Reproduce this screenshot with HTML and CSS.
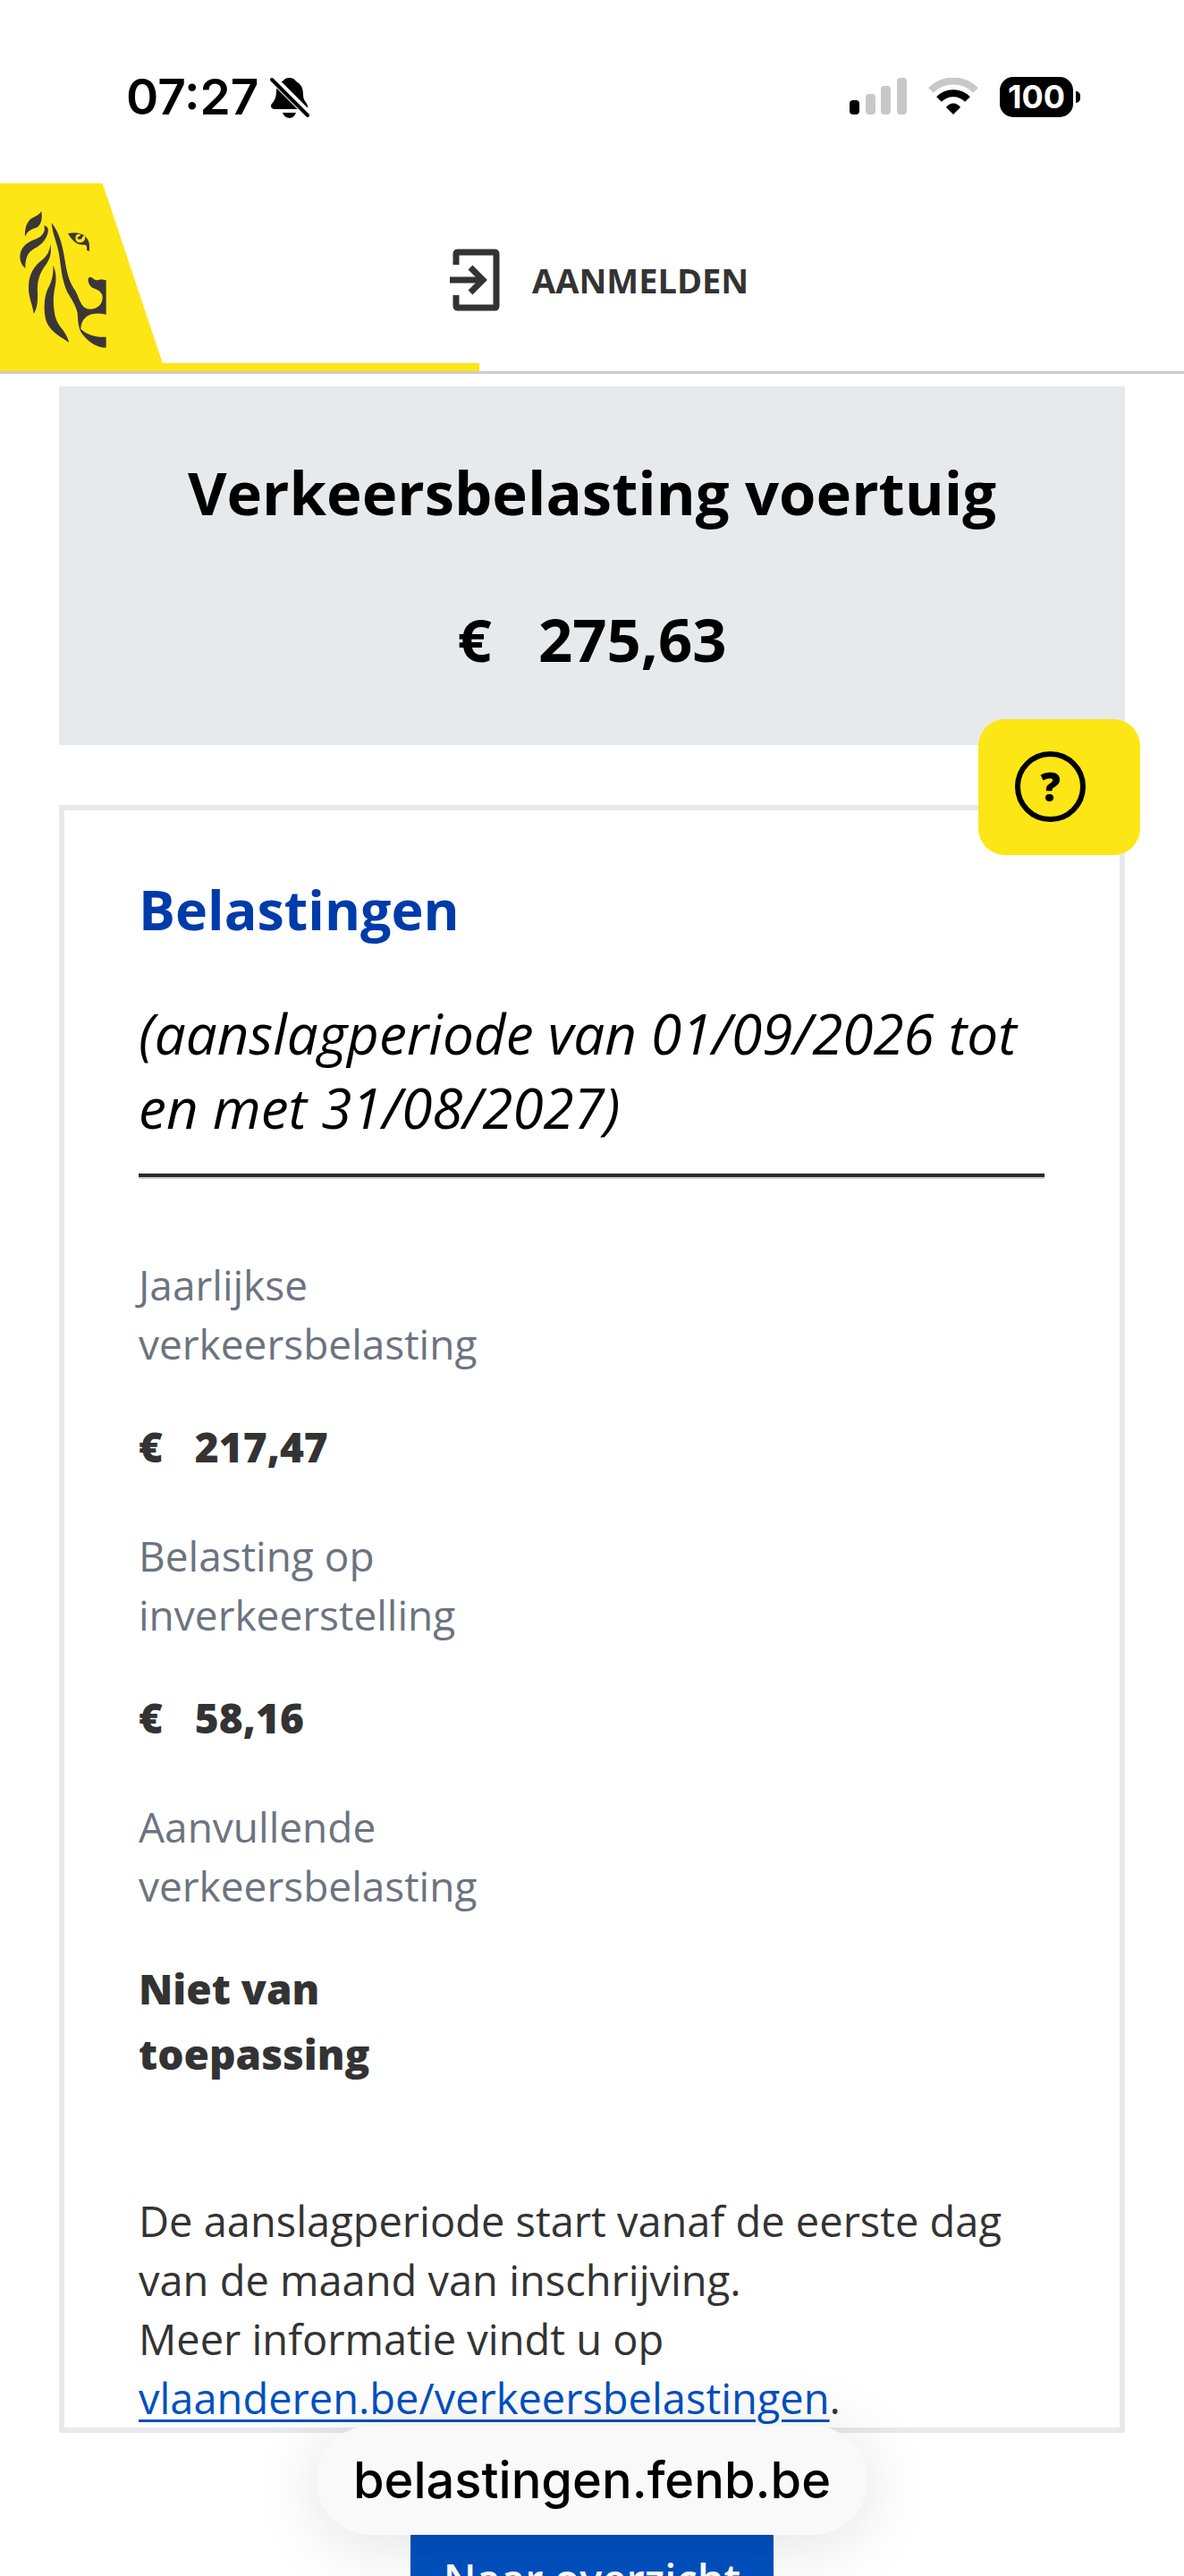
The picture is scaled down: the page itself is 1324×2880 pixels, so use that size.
FILE: index.html
```html
<!DOCTYPE html>
<html lang="nl">
<head>
    <meta charset="UTF-8">
    <meta name="viewport" content="width=device-width, initial-scale=1.0">
    <title>Verkeersbelasting voertuig</title>
    <link rel="stylesheet" href="styles.css">
</head>
<body>
    <div class="status-bar">
        <div class="status-left">
            <span class="time">07:27</span>
            <svg class="bell" viewBox="0 0 44 48" width="44" height="48" aria-hidden="true">
                <path d="M15 6 C17 2 27 2 29 7 C35 10 37 15 37 22 C37 29 42 31 42 35 C42 38 40 38 38 38 H5 C1 38 0 34 2 32 C6 27 7 24 7 17 C8 11 11 8 15 6Z"/>
                <path d="M14 42 H29 C28 45 25 48 22 48 C18 48 15 45 14 42Z"/>
                <path d="M1 2 L43 44" stroke="#fff" stroke-width="9"/>
                <path d="M2 5 L42 45" stroke="#000" stroke-width="4" stroke-linecap="round"/>
            </svg>
        </div>
        <div class="status-right">
            <svg viewBox="0 0 64 42" width="64" height="42" aria-hidden="true">
                <rect x="0" y="25" width="11" height="16" rx="4"/>
                <rect x="18" y="18" width="11" height="23" rx="4" fill="#c8c8c8"/>
                <rect x="35" y="9" width="11" height="32" rx="4" fill="#c8c8c8"/>
                <rect x="53" y="0" width="11" height="41" rx="4" fill="#c8c8c8"/>
            </svg>
            <svg viewBox="0 0 56 42" width="56" height="42" aria-hidden="true">
                <path d="M3 14 C17 0 39 0 53 14" fill="none" stroke="#c8c8c8" stroke-width="8"/>
                <path d="M12 24 C21 15 35 15 44 24" fill="none" stroke="#000" stroke-width="8"/>
                <path d="M28 41 L20 33 C24 27 32 27 36 33Z"/>
            </svg>
            <div class="battery">100</div>
        </div>
    </div>

    <header class="header">
        <a class="logo" href="#" aria-label="Vlaanderen">
            <svg viewBox="0 30 552 630" width="184" height="210" aria-hidden="true">
                <path fill="#fde615" d="M0 30 H344 L545 632 H552 V660 H0Z"/>
                <g fill="#3c3638">
                    <path d="M139 124 C143 150 138 165 125 178 C105 184 92 190 84 209 C82 180 90 160 105 148 C120 140 132 135 139 124Z"/>
                    <path d="M148 171 C164 176 164 190 158 204 C150 225 135 238 118 247 C100 258 85 270 85 315 C68 300 64 280 69 262 C76 238 95 228 112 220 C140 210 154 195 148 171Z"/>
                    <path d="M169 233 C174 265 168 285 150 308 C130 335 124 365 126 395 C127 425 125 450 113 467 C108 430 95 415 96 375 C97 330 118 305 140 288 C160 272 167 255 169 233Z"/>
                    <path d="M178 305 C190 330 190 355 183 385 C178 415 178 440 185 475 C195 515 220 520 232 564 C205 545 160 525 152 480 C145 440 150 400 165 375 C176 352 180 330 178 305Z"/>
                    <path d="M173 163 C200 195 210 240 218 290 C226 340 235 365 253 390 C268 420 272 452 303 452 C335 452 348 425 343 405 C338 388 322 385 310 380 C298 372 290 350 300 345 C312 342 312 358 330 354 C338 352 346 352 356 355 V470 C320 462 275 465 271 518 C290 538 325 548 356 545 V581 C330 582 300 565 280 540 C262 520 262 495 260 465 C255 440 238 415 226 395 C208 355 206 320 200 280 C195 235 175 200 173 163Z"/>
                    <path d="M228 198 C250 194 275 194 290 212 C302 225 300 240 300 257 L291 254 C292 245 292 238 286 236 C262 238 245 228 228 198Z"/>
                </g>
                <path fill="#fde615" d="M256 203 C250 215 254 228 268 229 C280 229 287 220 286 208 C282 203 276 207 276 213 C272 219 264 219 259 215 C263 207 268 208 272 202 C266 199 260 200 256 203Z"/>
            </svg>
        </a>
        <button class="login" type="button">
            <svg viewBox="0 0 56 70" width="56" height="70" fill="none" stroke="#333" aria-hidden="true">
                <path d="M7 18 V6 Q7 4 9 4 H50 Q52 4 52 6 V64 Q52 66 50 66 H9 Q7 66 7 64 V52" stroke-width="7"/>
                <path d="M0 35 H38" stroke-width="7"/>
                <path d="M23 21 L37 35 L23 49" stroke-width="7"/>
            </svg>
            AANMELDEN
        </button>
    </header>

    <main class="content">
        <section class="summary">
            <h1>Verkeersbelasting voertuig</h1>
            <p class="total">€&nbsp;&nbsp; 275,63</p>
        </section>

        <section class="card">
            <h2>Belastingen</h2>
            <p class="period">(aanslagperiode van 01/09/2026 tot en met 31/08/2027)</p>
            <hr>
            <dl class="taxes">
                <dt>Jaarlijkse verkeersbelasting</dt>
                <dd>€&nbsp;&nbsp; 217,47</dd>
                <dt>Belasting op inverkeerstelling</dt>
                <dd>€&nbsp;&nbsp; 58,16</dd>
                <dt>Aanvullende verkeersbelasting</dt>
                <dd>Niet van toepassing</dd>
            </dl>
            <p class="info">De aanslagperiode start vanaf de eerste dag van de maand van inschrijving.<br>
                Meer informatie vindt u op <a href="#">vlaanderen.be/verkeersbelastingen</a>.</p>
        </section>

        <button class="overview-btn" type="button">Naar overzicht</button>
    </main>

    <button class="help-btn" type="button" aria-label="Help">
        <span class="help-icon">?</span>
    </button>

    <div class="url-pill">belastingen.fenb.be</div>
</body>
</html>
```
FILE: styles.css
```css
*{
    box-sizing: border-box;
}
body{
    margin: 0;
    height: 100vh;
    overflow: hidden;
    background-color: #fff;
    color: #333;
    font-family: "Open Sans", sans-serif;
}
h1, h2, p, dl, dd{
    margin: 0;
}
button{
    border: none;
    font-family: inherit;
    cursor: pointer;
}
svg{
    display: block;
}

/* status bar */
.status-bar{
    display: flex;
    justify-content: space-between;
    align-items: center;
    height: 205px;
    padding: 11px 116px 0 141px;
    color: #000;
    font-family: "Inter", sans-serif;
}
.status-left{
    display: flex;
    align-items: center;
    gap: 12px;
}
.status-right{
    display: flex;
    align-items: center;
    gap: 24px;
}
.time{
    font-size: 55px;
    font-weight: 600;
    line-height: 66px;
}
.battery{
    position: relative;
    width: 82px;
    margin-right: 8px;
    border-radius: 15px;
    background-color: #000;
    color: #fff;
    font-size: 36px;
    font-weight: 700;
    line-height: 45px;
    text-align: center;
}
.battery::after{
    content: "";
    position: absolute;
    top: 16px;
    right: -8px;
    width: 5px;
    height: 13px;
    border-radius: 0 6px 6px 0;
    background-color: #000;
}

/* header */
.header{
    position: relative;
    display: flex;
    align-items: center;
    border-bottom: 3px solid #ccc;
}
.header::after{
    content: "";
    position: absolute;
    left: 0;
    bottom: 0;
    width: 536px;
    height: 9px;
    background-color: #fde615;
}
.login{
    display: flex;
    align-items: center;
    gap: 36px;
    margin-left: 319px;
    padding: 6px 0 0;
    background: none;
    color: #333;
    font-size: 38px;
    font-weight: 700;
    line-height: 66px;
}

/* content */
.content{
    padding: 14px 66px;
}
.summary{
    display: flex;
    flex-direction: column;
    gap: 80px;
    padding: 76px 40px 77px;
    background-color: #e7eaec;
    color: #000;
    text-align: center;
}
h1, .total{
    font-size: 67px;
    font-weight: 700;
    line-height: 84px;
}
.card{
    margin-top: 67px;
    padding: 73px 84px 0 83px;
    border: 6px solid #e7eaec;
}
h2{
    margin-bottom: 59px;
    color: #003baa;
    font-size: 61px;
    font-weight: 700;
    line-height: 76px;
}
.period{
    color: #000;
    font-size: 62px;
    font-style: italic;
    font-weight: 400;
    line-height: 83px;
}
hr{
    height: 6px;
    margin: 32px 0 85px;
    border: none;
    border-top: 4px solid #2b2b2b;
    border-bottom: 2px solid #ccc;
}
.taxes{
    width: 40%;
    font-size: 46px;
}
.taxes dt{
    color: #6b7480;
    line-height: 66px;
}
.taxes dd{
    margin: 46px 0 52px;
    font-weight: 800;
    line-height: 73px;
}
.info{
    margin-top: 117px;
    font-size: 47px;
    line-height: 66px;
}
.info a{
    color: #0050bf;
    text-underline-offset: 6px;
    text-decoration-thickness: 3px;
}
.overview-btn{
    display: block;
    margin: 100px auto 0;
    padding: 30px 37px;
    background-color: #0050bf;
    color: #fff;
    font-size: 47px;
    font-weight: 600;
    line-height: 66px;
}

/* floating parts */
.help-btn{
    position: fixed;
    top: 804px;
    right: 49px;
    width: 181px;
    height: 152px;
    padding: 0 20px 2px 0;
    border-radius: 30px;
    background-color: #fde615;
}
.help-icon{
    display: block;
    width: 79px;
    margin: 0 auto;
    border: 6px solid #000;
    border-radius: 50%;
    color: #000;
    font-size: 44px;
    font-weight: 800;
    line-height: 67px;
}
.url-pill{
    position: fixed;
    bottom: 46px;
    left: 50%;
    padding: 27px 41px;
    border-radius: 61px;
    background-color: #f9f9f9;
    box-shadow: 0 8px 80px rgba(0, 0, 0, 0.12);
    color: #000;
    font-family: "Inter", sans-serif;
    font-size: 56px;
    font-weight: 500;
    line-height: 68px;
    transform: translateX(-50%);
}
```
